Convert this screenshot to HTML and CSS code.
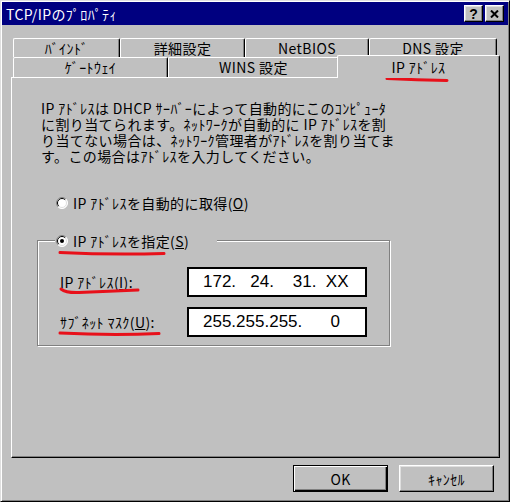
FILE: index.html
```html
<!DOCTYPE html>
<html lang="ja">
<head>
    <meta charset="UTF-8">
    <title>TCP/IPのﾌﾟﾛﾊﾟﾃｨ</title>
    <link rel="stylesheet" href="styles.css">
</head>
<body>
<div class="window">
    <div class="titlebar">
        <span class="title">TCP/IPのﾌﾟﾛﾊﾟﾃｨ</span>
        <div class="title-btns">
            <button class="tbtn">?</button>
            <button class="tbtn">
                <svg width="9" height="8" viewBox="0 0 9 8">
                    <path d="M1 0.5 L8 7.5 M8 0.5 L1 7.5" stroke="#000" stroke-width="2"/>
                </svg>
            </button>
        </div>
    </div>

    <div class="content">
        <div class="tabs">
            <div class="tabrow back">
                <div class="tab t-bind">ﾊﾞｲﾝﾄﾞ</div>
                <div class="tab t-adv">詳細設定</div>
                <div class="tab t-nb">NetBIOS</div>
                <div class="tab t-dns">DNS 設定</div>
            </div>
            <div class="tabrow front">
                <div class="tab t-gw">ｹﾞｰﾄｳｪｲ</div>
                <div class="tab t-wins">WINS 設定</div>
                <div class="tab t-ip selected">IP ｱﾄﾞﾚｽ</div>
            </div>
        </div>

        <div class="panel">
            <p class="desc">IP ｱﾄﾞﾚｽは DHCP ｻｰﾊﾞｰによって自動的にこのｺﾝﾋﾟｭｰﾀ<br>に割り当てられます。ﾈｯﾄﾜｰｸが自動的に IP ｱﾄﾞﾚｽを割<br>り当てない場合は、ﾈｯﾄﾜｰｸ管理者がｱﾄﾞﾚｽを割り当てま<br>す。この場合はｱﾄﾞﾚｽを入力してください。</p>

            <div class="opt">
                <svg class="radio" width="12" height="12" viewBox="0 0 12 12">
                    <circle cx="6" cy="6" r="5.5" fill="#fff"/>
                    <path d="M2.1 9.9 A5.5 5.5 0 0 1 9.9 2.1" fill="none" stroke="#808080"/>
                    <path d="M9.9 2.1 A5.5 5.5 0 0 1 2.1 9.9" fill="none" stroke="#fff"/>
                    <path d="M2.8 9.2 A4.5 4.5 0 0 1 9.2 2.8" fill="none" stroke="#000"/>
                    <path d="M9.2 2.8 A4.5 4.5 0 0 1 2.8 9.2" fill="none" stroke="#dfdfdf"/>
                </svg>
                <span>IP ｱﾄﾞﾚｽを自動的に取得(<u>O</u>)</span>
            </div>

            <div class="group">
                <div class="legend">
                    <svg class="radio" width="12" height="12" viewBox="0 0 12 12">
                        <circle cx="6" cy="6" r="5.5" fill="#fff"/>
                        <path d="M2.1 9.9 A5.5 5.5 0 0 1 9.9 2.1" fill="none" stroke="#808080"/>
                        <path d="M9.9 2.1 A5.5 5.5 0 0 1 2.1 9.9" fill="none" stroke="#fff"/>
                        <path d="M2.8 9.2 A4.5 4.5 0 0 1 9.2 2.8" fill="none" stroke="#000"/>
                        <path d="M9.2 2.8 A4.5 4.5 0 0 1 2.8 9.2" fill="none" stroke="#dfdfdf"/>
                        <circle cx="6" cy="6" r="2" fill="#000"/>
                    </svg>
                    <span>IP ｱﾄﾞﾚｽを指定(<u>S</u>)</span>
                </div>
                <div class="field first">
                    <label>IP ｱﾄﾞﾚｽ(<u>I</u>):</label>
                    <div class="ipbox">172.   24.    31.  XX</div>
                </div>
                <div class="field">
                    <label>ｻﾌﾞﾈｯﾄ ﾏｽｸ(<u>U</u>):</label>
                    <div class="ipbox">255.255.255.      0</div>
                </div>
            </div>
        </div>

        <div class="actions">
            <button class="btn default">OK</button>
            <button class="btn">ｷｬﾝｾﾙ</button>
        </div>
    </div>

    <!-- hand-drawn red marks over the dialog -->
    <svg class="marks" width="510" height="502" viewBox="0 0 510 502">
        <g fill="none" stroke="#e8101a" stroke-width="3" stroke-linecap="round">
            <path d="M386 77.5 Q416 79 446 79.5"/>
            <path d="M59 251.5 Q110 254 163 252.5"/>
            <path d="M60 288 Q65 292 78 291.5 Q108 290 137 289"/>
            <path d="M59 332 Q110 334.5 158 332.5"/>
        </g>
    </svg>
</div>
</body>
</html>
```

FILE: styles.css
```css
body {
    margin: 0;
    background: #c0c0c0;
    font-family: "Noto Sans CJK JP", sans-serif;
    font-size: 14px;
    letter-spacing: 0.4px;
    color: #000;
}
.window {
    position: relative;
    width: 510px;
    height: 502px;
    box-sizing: border-box;
    padding: 1px;
    border: 1px solid;
    border-color: #dfdfdf #000 #000 #dfdfdf;
    box-shadow: inset 1px 1px #fff, inset -1px -1px #808080;
    background: #c0c0c0;
}
.titlebar {
    height: 23px;
    background: #000080;
    color: #fff;
    display: flex;
    align-items: center;
    justify-content: space-between;
    padding: 0 4px 0 4px;
}
.title {
    line-height: 16px;
}
.title-btns {
    display: flex;
    gap: 2px;
}
.tbtn {
    width: 19px;
    height: 17px;
    box-sizing: border-box;
    padding: 0;
    background: #c0c0c0;
    border: 1px solid;
    border-color: #fff #000 #000 #fff;
    box-shadow: inset -1px -1px #808080, inset 1px 1px #dfdfdf;
    display: flex;
    align-items: center;
    justify-content: center;
    font: bold 14px "Liberation Sans", sans-serif;
    color: #000;
}
.content {
    padding: 13px 8px 0 9px;
}

/* tabs */
.tabs {
    padding-left: 2px;
}
.tabrow {
    display: flex;
}
.tabrow.back {
    height: 19px;
}
.tabrow.front {
    height: 20px;
}
.tab {
    box-sizing: border-box;
    height: 100%;
    background: #c0c0c0;
    border-top: 1px solid #fff;
    border-left: 1px solid #fff;
    border-right: 1px solid #000;
    border-radius: 2px 2px 0 0;
    box-shadow: inset -1px 0 #808080;
    text-align: center;
    line-height: 18px;
}
.front .tab {
    line-height: 19px;
}
.t-bind { width: 107px; }
.t-adv { width: 125px; }
.t-nb { width: 124px; }
.t-dns { width: 128px; }
.t-gw { width: 155px; }
.t-wins { width: 171px; }
.tab.selected {
    position: relative;
    z-index: 1;
    width: 163px;
    height: 23px;
    margin: -2px 0 0 -2px;
    line-height: 22px;
}

/* page */
.panel {
    height: 381px;
    box-sizing: border-box;
    border: 1px solid;
    border-color: #fff #000 #000 #fff;
    box-shadow: inset -1px -1px #808080;
    padding: 22px 0 0 25px;
}
.desc {
    margin: 0 0 0 4px;
    line-height: 16px;
}
.opt {
    display: flex;
    align-items: center;
    gap: 5px;
    height: 16px;
    margin: 31px 0 0 19px;
}
.radio {
    flex: none;
}
.group {
    width: 353px;
    height: 106px;
    box-sizing: border-box;
    margin-top: 29px;
    border: 1px solid #808080;
    box-shadow: inset 1px 1px #fff, 1px 1px #fff;
}
.legend {
    display: flex;
    align-items: center;
    gap: 5px;
    width: 162px;
    height: 16px;
    box-sizing: border-box;
    margin: -8px 0 0 17px;
    padding-left: 1px;
    background: #c0c0c0;
}
.field {
    display: flex;
    align-items: center;
    height: 30px;
    margin-top: 10px;
    padding-left: 22px;
}
.field.first {
    margin-top: 18px;
}
.field label {
    width: 127px;
}
.ipbox {
    width: 180px;
    height: 30px;
    box-sizing: border-box;
    border: 2px solid #000;
    background: #fff;
    padding-left: 14px;
    font: 17px "Liberation Sans", sans-serif;
    letter-spacing: 0;
    line-height: 26px;
    white-space: pre;
}

/* dialog buttons */
.actions {
    display: flex;
    justify-content: flex-end;
    gap: 11px;
    margin: 7px 6px 0 0;
}
.btn {
    width: 95px;
    height: 27px;
    box-sizing: border-box;
    padding: 0;
    background: #c0c0c0;
    border: 1px solid;
    border-color: #fff #000 #000 #fff;
    box-shadow: inset -1px -1px #808080, inset 1px 1px #dfdfdf;
    font-family: "Noto Sans CJK JP", sans-serif;
    font-size: 14px;
    letter-spacing: 0.4px;
    color: #000;
}
.btn.default {
    border: 1px solid #000;
    box-shadow: inset 1px 1px #fff, inset -1px -1px #000, inset -2px -2px #808080;
}

.marks {
    position: absolute;
    left: 0;
    top: 0;
    pointer-events: none;
}
```
